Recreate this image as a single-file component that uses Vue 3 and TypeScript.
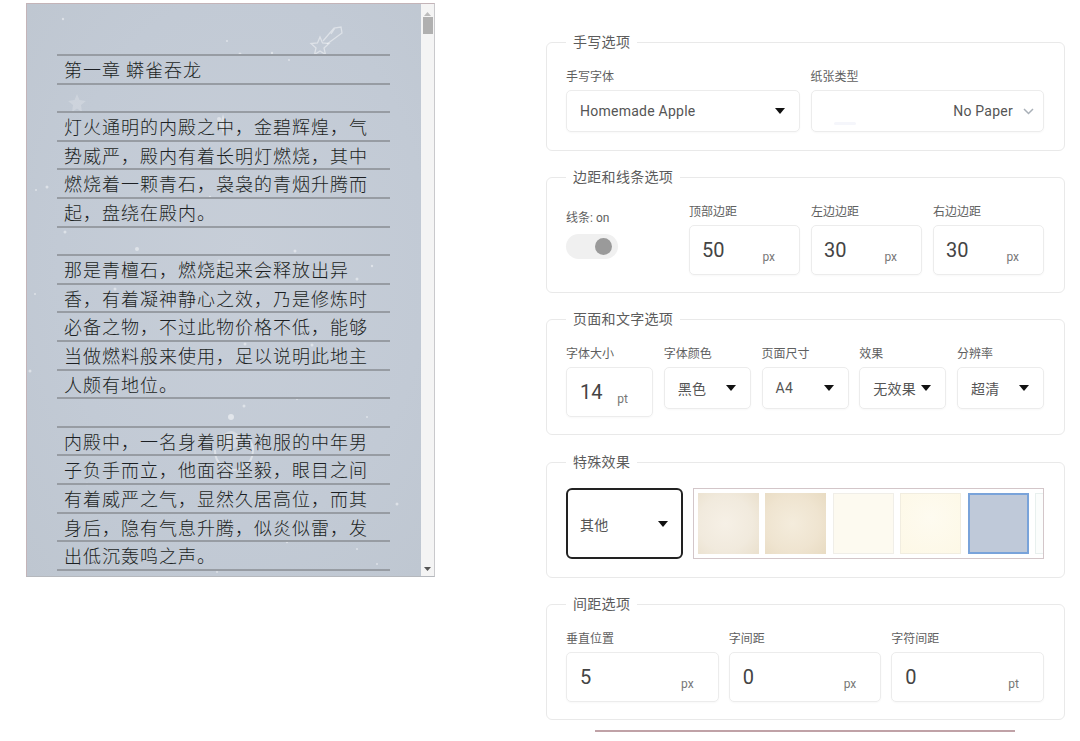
<script setup lang="ts">
const lines: string[] = [
  '第一章 蟒雀吞龙', '',
  '灯火通明的内殿之中，金碧辉煌，气', '势威严，殿内有着长明灯燃烧，其中', '燃烧着一颗青石，袅袅的青烟升腾而', '起，盘绕在殿内。', '',
  '那是青檀石，燃烧起来会释放出异', '香，有着凝神静心之效，乃是修炼时', '必备之物，不过此物价格不低，能够', '当做燃料般来使用，足以说明此地主', '人颇有地位。', '',
  '内殿中，一名身着明黄袍服的中年男', '子负手而立，他面容坚毅，眼目之间', '有着威严之气，显然久居高位，而其', '身后，隐有气息升腾，似炎似雷，发', '出低沉轰鸣之声。',
]
const specks: [number, number, number][] = [
  [36, 15, 1.2], [213, 50, 1.5], [200, 37, 1], [245, 49, 1.2], [262, 56, 1], [192, 115, 2], [20, 183, 1.5], [9, 186, 1], [183, 193, 1.2], [38, 228, 1.5], [110, 245, 2], [192, 257, 1.5], [268, 247, 1.5], [88, 285, 1.5], [180, 264, 1], [330, 275, 1.5], [345, 262, 1.2], [8, 290, 1], [270, 316, 1.5], [3, 367, 1.5], [218, 340, 1.5], [270, 395, 1], [217, 402, 1.5], [285, 341, 1.5], [340, 413, 1], [310, 432, 1.5], [60, 480, 1.2], [370, 500, 1.5], [350, 560, 1], [190, 568, 1], [260, 538, 1.2], [330, 545, 1],
]
const thumbs = ['t1', 't2', 't3', 't4', 't5 active', 't6']
</script>

<template>
  <div class="page">
    <div class="paper">
      <div class="sheet">
        <svg class="stars" width="395" height="572" viewBox="0 0 395 572" fill="none" aria-hidden="true">
          <circle v-for="(s, i) in specks" :key="i" :cx="s[0]" :cy="s[1]" :r="s[2]" fill="#fff" opacity="0.45" />
          <g stroke="#fff" stroke-opacity="0.45" stroke-width="1.3">
            <path d="M293 33l2.500 6 6.500.500-5 4.500 1.500 6.500-5.500-3.500-5.500 3.500 1.500-6.500-5-4.500 6.500-.500z" />
            <path d="M296 37l11-13 7-1 1 6-15 11M304 30l4-6" />
          </g>
          <path d="M50 90l2.500 6 6.500 1-5 4 1 7-5-3.500-5 3.500 1-7-5-4 6.500-1z" fill="#fff" opacity="0.2" />
          <path d="M196 110l2 7 5 3-5 3-2 7-2-7-5-3 5-3z" fill="#fff" opacity="0.4" />
          <g transform="translate(8 8)">
            <path d="M180 438a19 19 0 1 0 33-12" stroke="#fff" stroke-opacity="0.45" stroke-width="2" />
            <circle cx="196" cy="428" r="9" fill="#fff" opacity="0.3" />
            <circle cx="196" cy="405" r="3" fill="#fff" opacity="0.5" />
          </g>
        </svg>
        <div class="writing">
          <div v-for="(line, i) in lines" :key="i" class="line">{{ line }}</div>
        </div>
      </div>
      <div class="scrollbar">
        <svg width="7" height="4" viewBox="0 0 7 4"><path d="M3.500 0L7 4H0z" fill="#bbb" /></svg>
        <div class="thumb"></div>
        <svg class="down" width="7" height="4" viewBox="0 0 7 4"><path d="M0 0h7L3.500 4z" fill="#555" /></svg>
      </div>
    </div>

    <div class="panel">
      <fieldset class="group one">
        <legend>手写选项</legend>
        <div class="row two">
          <div class="field">
            <label>手写字体</label>
            <div class="select tall"><span>Homemade Apple</span><i class="caret"></i></div>
          </div>
          <div class="field">
            <label>纸张类型</label>
            <div class="select tall paper-select">
              <i class="smudge"></i>
              <span>No Paper</span>
              <svg width="11" height="7" viewBox="0 0 11 7" fill="none"><path d="M1 1l4.500 4.500L10 1" stroke="#a9b0b8" stroke-width="1.500" /></svg>
            </div>
          </div>
        </div>
      </fieldset>

      <fieldset class="group">
        <legend>边距和线条选项</legend>
        <div class="row margins">
          <div class="toggle-col">
            <label>线条: on</label>
            <div class="toggle"><i></i></div>
          </div>
          <div class="field"><label>顶部边距</label><div class="num"><b>50</b><em>px</em></div></div>
          <div class="field"><label>左边边距</label><div class="num"><b>30</b><em>px</em></div></div>
          <div class="field"><label>右边边距</label><div class="num"><b>30</b><em>px</em></div></div>
        </div>
      </fieldset>

      <fieldset class="group">
        <legend>页面和文字选项</legend>
        <div class="row five">
          <div class="field"><label>字体大小</label><div class="num"><b>14</b><em>pt</em></div></div>
          <div class="field"><label>字体颜色</label><div class="select"><span>黑色</span><i class="caret"></i></div></div>
          <div class="field"><label>页面尺寸</label><div class="select"><span>A4</span><i class="caret"></i></div></div>
          <div class="field"><label>效果</label><div class="select"><span>无效果</span><i class="caret"></i></div></div>
          <div class="field"><label>分辨率</label><div class="select"><span>超清</span><i class="caret"></i></div></div>
        </div>
      </fieldset>

      <fieldset class="group special">
        <legend>特殊效果</legend>
        <div class="effects">
          <div class="select focus"><span>其他</span><i class="caret"></i></div>
          <div class="gallery">
            <div v-for="t in thumbs" :key="t" class="swatch" :class="t"></div>
          </div>
        </div>
      </fieldset>

      <fieldset class="group">
        <legend>间距选项</legend>
        <div class="row three">
          <div class="field"><label>垂直位置</label><div class="num"><b>5</b><em>px</em></div></div>
          <div class="field"><label>字间距</label><div class="num"><b>0</b><em>px</em></div></div>
          <div class="field"><label>字符间距</label><div class="num"><b>0</b><em>pt</em></div></div>
        </div>
      </fieldset>

      <div class="bar"></div>
    </div>
  </div>
</template>

<style scoped>
.page {
  display: flex;
  align-items: flex-start;
  height: 741px;
  overflow: hidden;
  box-sizing: border-box;
  padding-left: 26px;
  background: #fff;
  font-family: Roboto, "Noto Sans CJK SC", sans-serif;
  color: #555;
}
.paper {
  display: flex;
  box-sizing: border-box;
  width: 409px;
  height: 574px;
  margin-top: 3px;
  border: 1px solid #c4b4b8;
  border-right-color: #c9c9cc;
  border-bottom-color: #b5b8bd;
  overflow: hidden;
}
.sheet {
  position: relative;
  flex: 1;
  min-width: 0;
  overflow: hidden;
  background: radial-gradient(ellipse at 55% 45%, #c7ced8 0%, #c2cad5 60%, #bec6d0 100%);
}
.stars {
  position: absolute;
  left: 0;
  top: 0;
  filter: blur(0.7px);
}
.writing {
  position: relative;
  margin: 50px 31px 0 30px;
  border-top: 2px solid #979ca3;
}
.line {
  box-sizing: border-box;
  height: 28.6px;
  padding: 0 0 0 7px;
  border-bottom: 2px solid #979ca3;
  font-family: "Noto Sans CJK SC", sans-serif;
  font-size: 18px;
  font-weight: 300;
  line-height: 27px;
  letter-spacing: 1px;
  color: #1c1f23;
  white-space: nowrap;
}
.scrollbar {
  display: flex;
  flex-direction: column;
  align-items: center;
  width: 13px;
  flex: none;
  padding-top: 8px;
  box-sizing: border-box;
  background: #f4f4f4;
}
.thumb {
  width: 10px;
  height: 17px;
  margin-top: 1px;
  background: #b0b0b0;
}
.down {
  margin-top: auto;
  margin-bottom: 5px;
}

.panel {
  flex: none;
  width: 519px;
  margin-left: 111px;
  padding-top: 32px;
}
.group {
  margin: 0 0 16px;
  padding: 17px 20px 17px 19px;
  border: 1px solid #e9e9e9;
  border-radius: 6px;
  min-width: 0;
}
.group.one {
  padding-bottom: 18px;
}
.group.special {
  margin-top: 17px;
  padding-top: 16px;
  padding-bottom: 18px;
}
legend {
  padding: 0 7px;
  font-size: 14px;
  line-height: 20px;
  letter-spacing: 0.3px;
  color: #5c5c5c;
}
label {
  display: block;
  font-size: 12px;
  line-height: 16px;
  color: #5f5f5f;
}
.row {
  display: grid;
  align-items: start;
}
.two {
  grid-template-columns: repeat(2, 1fr);
  gap: 11px;
}
.margins {
  grid-template-columns: 112px repeat(3, 1fr);
  gap: 11px;
}
.margins .num {
  padding-left: 12px;
}
.five {
  grid-template-columns: repeat(5, 1fr);
  gap: 10.750px;
}
.three {
  grid-template-columns: repeat(3, 1fr);
  gap: 10px;
}
.field {
  display: flex;
  flex-direction: column;
  gap: 5px;
}
.select,
.num {
  display: flex;
  box-sizing: border-box;
  align-items: center;
  justify-content: space-between;
  border: 1px solid #ececec;
  border-radius: 5px;
  box-shadow: 0 1px 2px rgba(0, 0, 0, 0.03);
}
.select {
  height: 42px;
  padding: 0 14px 0 13px;
  font-size: 14px;
  letter-spacing: 0.25px;
  color: #555;
}
.tall {
  padding-left: 13px;
}
.caret {
  flex: none;
  width: 0;
  height: 0;
  border-left: 5px solid transparent;
  border-right: 5px solid transparent;
  border-top: 6px solid #111;
}
.paper-select {
  position: relative;
  justify-content: flex-end;
  gap: 10px;
  padding-right: 9px;
}
.smudge {
  position: absolute;
  left: 22px;
  bottom: 6px;
  width: 22px;
  height: 3px;
  border-radius: 2px;
  background: #f5f6fb;
}
.num {
  height: 50px;
  padding: 0 24px 0 13px;
}
.num b {
  font-size: 20px;
  font-weight: 400;
  color: #444;
}
.num em {
  margin-top: 13px;
  font-size: 12px;
  font-style: normal;
  color: #777;
}
.toggle-col {
  padding-top: 6px;
}
.toggle {
  display: flex;
  align-items: center;
  justify-content: flex-end;
  box-sizing: border-box;
  width: 52px;
  height: 25px;
  margin-top: 8px;
  padding-right: 6px;
  border-radius: 13px;
  background: #f0f0f0;
}
.toggle i {
  width: 17px;
  height: 17px;
  border-radius: 50%;
  background: #9a9a9a;
}
.effects {
  display: flex;
  gap: 10px;
}
.focus {
  flex: none;
  width: 117px;
  height: 71px;
  border: 2px solid #222;
  padding-left: 12px;
  padding-right: 13px;
  border-radius: 6px;
  box-shadow: none;
}
.gallery {
  display: flex;
  flex: 1;
  min-width: 0;
  gap: 6.400px;
  box-sizing: border-box;
  height: 71px;
  padding: 4px;
  border: 1px solid #d3c6c9;
  overflow: hidden;
}
.swatch {
  flex: none;
  box-sizing: border-box;
  width: 61px;
  height: 61px;
}
.t1 {
  background: radial-gradient(circle at 45% 50%, #f6f0e6 0%, #f1eadd 60%, #eae0cd 100%);
}
.t2 {
  background: radial-gradient(circle at 45% 50%, #f4ecdc 0%, #efe4d0 60%, #e8dbc2 100%);
}
.t3 {
  border: 1px solid #f0eee8;
  background: #fdfaf0;
}
.t4 {
  border: 1px solid #f1ede0;
  background: radial-gradient(circle at 50% 40%, #fefbf0 0%, #fdf8e6 100%);
}
.t5 {
  background: #bfc9d9;
}
.t5.active {
  border: 2px solid #79a3da;
}
.t6 {
  border: 1px solid #e8f0ee;
  background: #fbfdfc;
}
.bar {
  width: 420px;
  height: 2px;
  margin: -6px 0 0 49px;
  background: #c0a2a7;
}
</style>

<style>
html,
body {
  margin: 0;
  overflow: hidden;
  background: #fff;
}
</style>
